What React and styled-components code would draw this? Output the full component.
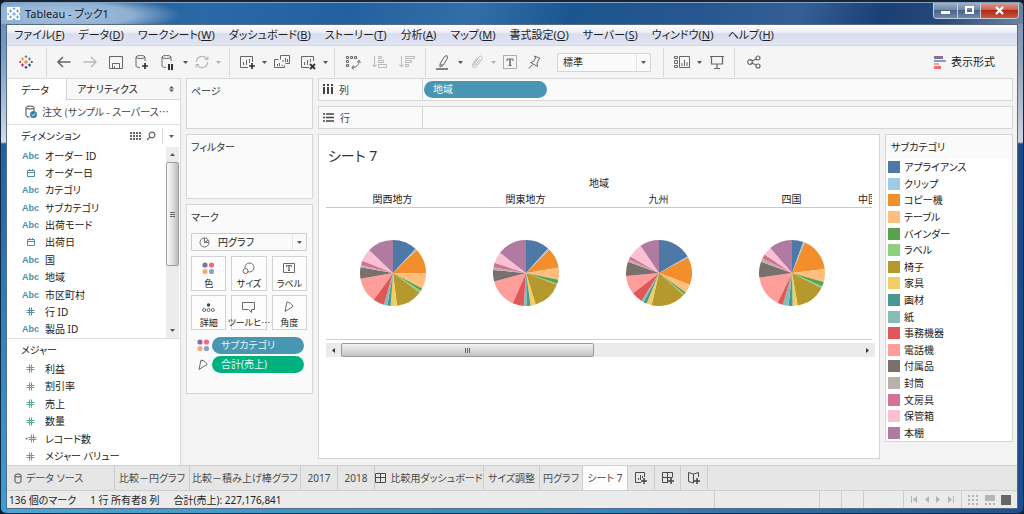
import React from "react";
import styled, { createGlobalStyle, css } from "styled-components";

const Global = createGlobalStyle`
  * { box-sizing: border-box; }
  body {
    margin: 0;
    background: #101c2c;
    font-family: "Noto Sans", "Noto Sans CJK JP", sans-serif;
    font-size: 10px;
    line-height: 16px;
    color: #222;
    font-feature-settings: "palt";
  }
  button, select {
    font: inherit;
    font-feature-settings: inherit;
    color: inherit;
    margin: 0;
    padding: 0;
    border: 0;
    background: none;
  }
  h1, h2, p, ul { margin: 0; padding: 0; font-size: inherit; font-weight: 400; list-style: none; }
  svg { display: block; flex: none; }
`;

/* ---------- window frame ---------- */

const Frame = styled.div`
  min-height: 100vh;
  display: flex;
  flex-direction: column;
  padding: 0 5px 4px;
  border: 1px solid #16263c;
  border-top: 2px solid #1b2430;
  border-radius: 6px;
  background:
    linear-gradient(180deg, #5d8dbd 0, #6f9ccb 50px, #d5dbe6 140px, #1d63a0 142px, #2b7fb8 300px, #35a3da 100%) left / 8px 100% no-repeat,
    linear-gradient(180deg, #7d90ad 0, #8a9cb6 50px, #ccd3e0 140px, #1b4a85 142px, #1f4f8f 100%) right / 8px 100% no-repeat,
    linear-gradient(90deg, #4aa6d6 0, #2f86c4 60%, #1c4f92 100%);
`;

const TitleBar = styled.header`
  display: flex;
  align-items: center;
  height: 22px;
  margin: 0 -5px;
  padding-left: 6px;
  border-radius: 5px 5px 0 0;
  border-top: 1px solid #7fa5cc;
  background:
    radial-gradient(ellipse 120px 20px at 60px 12px, #a9c1dc 0, #8fb0d2 60%, transparent 100%),
    linear-gradient(110deg, #4f83b8 0, #245f9e 12%, #2a69a6 20%, #23609e 34%, #326fa9 46%, #1b5590 56%, #27568f 68%, #345f96 78%, #1a3f74 86%, #27497a 92%, #71839f 100%);
`;

const AppTitle = styled.h1`
  flex: 1;
  margin-left: 5px;
  font-size: 11px;
  color: #10202f;
`;

const LogoTile = styled.span`
  width: 13px;
  height: 13px;
  display: grid;
  place-items: center;
  overflow: hidden;
  background: #fff;
`;

const WindowButtons = styled.div`
  display: flex;
  align-self: flex-start;
  height: 16px;
  margin-right: 4px;
  border: 1px solid #c0cddd;
  border-top: 0;
  border-radius: 0 0 4px 4px;
  overflow: hidden;
`;

const WindowButton = styled.button`
  width: ${(p) => (p.$close ? 38 : 23)}px;
  display: grid;
  place-items: center;
  border-left: ${(p) => (p.$first ? 0 : 1)}px solid #c0cddd;
  background: ${(p) =>
    p.$close
      ? "linear-gradient(#dc9c90 0, #c9604f 45%, #b02a1a 50%, #cf5436 100%)"
      : "linear-gradient(#9fb0c8 0, #7188a8 45%, #4a6388 50%, #6f89ab 100%)"};
`;

const Client = styled.div`
  flex: 1;
  display: flex;
  flex-direction: column;
  border: 1px solid #5a6b80;
  background: #f3f3f3;
`;

/* ---------- menu and toolbar ---------- */

const MenuBar = styled.nav`
  display: flex;
  gap: 14px;
  height: 20px;
  padding: 0 7px;
  background: linear-gradient(#fdfdfe 0, #eef0f8 35%, #d9deee 45%, #e1e5f3 100%);
`;

const MenuItem = styled.button`
  font-size: 11px;
  white-space: nowrap;
  color: #1d1d1d;
`;

const Toolbar = styled.div`
  display: flex;
  align-items: center;
  height: 33px;
  border-top: 1px solid #d8d8dc;
  background: #f5f5f5;
`;

const ToolButton = styled.button`
  width: ${(p) => p.$w || 26}px;
  height: 24px;
  display: grid;
  place-items: center;
  color: ${(p) => (p.$off ? "#b9b9b9" : "#666")};
`;

const ToolRule = styled.span`
  width: 1px;
  height: 29px;
  margin: 0 ${(p) => p.$after || 4}px 0 ${(p) => p.$before || 4}px;
  background: #d9d9d9;
`;

const SelectBox = styled.label`
  display: flex;
  align-items: center;
  height: ${(p) => p.$h || 18}px;
  width: ${(p) => p.$w || "auto"};
  margin: ${(p) => p.$top || 0}px 0 0 ${(p) => p.$left || 0}px;
  border: 1px solid ${(p) => p.$line || "#d4d4d4"};
  border-radius: 1px;
  background: #fafafa;
  select {
    appearance: none;
    flex: 1;
    min-width: 0;
    height: 100%;
    padding-left: 5px;
    outline: 0;
  }
`;

const SelectArrow = styled.span`
  width: 14px;
  height: 100%;
  display: grid;
  place-items: center;
  border-left: 1px solid #e6e6e6;
  pointer-events: none;
`;

const ShowMe = styled.button`
  display: flex;
  align-items: center;
  gap: 5px;
  margin-left: auto;
  margin-right: 22px;
  font-size: 11px;
`;

/* ---------- work area ---------- */

const Work = styled.main`
  flex: 1;
  display: flex;
  min-height: 0;
`;

const DataPane = styled.aside`
  width: 174px;
  flex: none;
  display: flex;
  flex-direction: column;
  border-right: 1px solid #d9d9d9;
  background: #fff;
`;

const PaneTabs = styled.div`
  display: flex;
  height: 22px;
`;

const PaneTab = styled.button`
  display: flex;
  align-items: center;
  justify-content: space-between;
  text-align: left;
  border-top: 1px solid #dcdcdc;
  ${(p) =>
    p.$active
      ? css`
          width: 59px;
          padding-left: 14px;
        `
      : css`
          flex: 1;
          padding: 0 6px 0 10px;
          border-left: 1px solid #d4d4d4;
          border-bottom: 1px solid #d4d4d4;
          background: #f7f7f7;
        `}
`;

const SourceRow = styled.div`
  display: flex;
  align-items: center;
  gap: 4px;
  height: 25px;
  padding-left: 18px;
  border-bottom: 1px solid #dedede;
  color: #444;
  white-space: nowrap;
`;

/* The Japanese face sets the ellipsis at mid height. */
const Clipped = styled.span`
  font-family: "Noto Sans CJK JP", sans-serif;
`;

const SectionHead = styled.div`
  display: flex;
  align-items: center;
  height: ${(p) => p.$h || 22}px;
  padding-left: 14px;
  h2 { flex: 1; }
`;

const HeadButton = styled.button`
  width: 16px;
  height: 16px;
  display: grid;
  place-items: center;
  color: #666;
`;

const HeadMenu = styled(HeadButton)`
  width: 18px;
  margin-left: 3px;
  border-left: 1px solid #d9d9d9;
`;

const FieldArea = styled.div`
  display: flex;
  height: 192px;
  border-bottom: 1px solid #dedede;
`;

const FieldList = styled.ul`
  flex: 1;
  display: grid;
  grid-auto-rows: 1fr;
  ${(p) => p.$measures && "flex: none; height: 105px;"}
`;

const Field = styled.li`
  display: flex;
  align-items: center;
  white-space: nowrap;
`;

const FieldIcon = styled.span`
  width: 38px;
  padding-left: 9px;
  display: flex;
  justify-content: center;
  font-family: "Liberation Sans", sans-serif;
  font-size: 9px;
  font-weight: 700;
  color: ${(p) => (p.$green ? "#4fae8b" : "#4f8fac")};
`;

const VScroll = styled.div`
  width: 13px;
  margin-right: 1px;
  display: flex;
  flex-direction: column;
  background: #ececec;
`;

const VArrow = styled.span`
  height: 15px;
  display: grid;
  place-items: center;
`;

const VThumb = styled.div`
  height: 104px;
  margin-bottom: auto;
  display: grid;
  place-items: center;
  border: 1px solid #9d9d9d;
  border-radius: 2px;
  background: linear-gradient(90deg, #fafafa, #e0e0e0 50%, #bdbdbd);
`;

/* ---------- cards ---------- */

const Cards = styled.div`
  width: 127px;
  flex: none;
  margin: 0 5px;
  display: flex;
  flex-direction: column;
  gap: 5px;
`;

const Card = styled.section`
  height: ${(p) => p.$h}px;
  padding: 4px 5px 0 4px;
  border: 1px solid #d6d6d6;
  background: #fafafa;
  h2 { color: #333; }
`;

const MarkGrid = styled.div`
  display: grid;
  grid-template-columns: repeat(3, minmax(0, 1fr));
  gap: 4px 5px;
  margin-top: 5px;
`;

const MarkButton = styled.button`
  height: 35px;
  display: flex;
  flex-direction: column;
  align-items: center;
  justify-content: space-between;
  padding-top: 5px;
  border: 1px solid #d2d2d2;
  background: #fdfdfd;
  font-size: 9px;
  line-height: 12px;
  white-space: nowrap;
  color: #222;
  svg { color: #6a6a6a; }
`;

const MarkRow = styled.div`
  display: flex;
  align-items: center;
  margin-top: ${(p) => p.$top}px;
  padding-right: 3px;
`;

const MarkRowIcon = styled.span`
  width: 21px;
  display: flex;
  justify-content: center;
  padding-left: 3px;
  color: #6a6a6a;
`;

const Pill = styled.button`
  ${(p) => (p.$w ? `width: ${p.$w}px;` : "flex: 1;")}
  height: 17px;
  padding-left: 9px;
  border-radius: 9px;
  text-align: left;
  line-height: 17px;
  color: #eaf6fa;
  background: ${(p) => (p.$green ? "#00b180" : "#4996b2")};
`;

/* ---------- shelves and view ---------- */

const Stage = styled.div`
  flex: 1;
  min-width: 0;
  display: flex;
  flex-direction: column;
  gap: 5px;
  padding-right: 4px;
`;

const Shelf = styled.div`
  display: flex;
  height: 23px;
  border: 1px solid #d6d6d6;
  background: #fafafa;
`;

const ShelfName = styled.div`
  width: 104px;
  display: flex;
  align-items: center;
  gap: 6px;
  padding-left: 4px;
  border-right: 1px solid #d6d6d6;
  color: #444;
`;

const ShelfBody = styled.div`
  padding: 2px 1px;
`;

const Lower = styled.div`
  display: flex;
  gap: 5px;
  align-items: flex-start;
  flex: 1;
`;

const View = styled.section`
  flex: 1;
  min-width: 0;
  align-self: stretch;
  margin-bottom: 6px;
  padding: 11px 4px 0 7px;
  border: 1px solid #d6d6d6;
  background: #fff;
`;

const SheetTitle = styled.h2`
  padding-left: 2px;
  font-size: 14px;
  line-height: 20px;
  color: #333;
`;

const ChartArea = styled.div`
  margin: 9px 3px 0 0;
  padding-bottom: 1px;
  border-bottom: 1px solid #cfcfcf;
  overflow: hidden;
`;

const ChartHead = styled.div`
  text-align: center;
`;

const PieColumns = styled.div`
  display: flex;
`;

const PieColumn = styled.div`
  width: 133px;
  flex: none;
  h2 {
    text-align: ${(p) => (p.$cut ? "left" : "center")};
    border-bottom: 1px solid #c8c8c8;
  }
`;

const PieCell = styled.div`
  height: 130px;
  display: grid;
  place-items: center;
`;

const HScroll = styled.div`
  display: flex;
  height: 14px;
  margin-top: 3px;
  background: #ebebeb;
`;

const HArrow = styled.span`
  width: 15px;
  display: grid;
  place-items: center;
`;

const HThumb = styled.div`
  width: 46%;
  margin-right: auto;
  display: grid;
  place-items: center;
  border: 1px solid #9a9a9a;
  border-radius: 2px;
  background: linear-gradient(#f2f2f2, #dcdcdc 50%, #c2c2c2);
`;

const Legend = styled.aside`
  width: 128px;
  border: 1px solid #d6d6d6;
  background: #fff;
  h2 {
    height: 24px;
    padding: 4px 5px 0;
    background: #fafafa;
  }
  ul {
    height: 282px;
    display: grid;
    grid-auto-rows: 1fr;
  }
`;

const LegendItem = styled.li`
  display: flex;
  align-items: center;
  gap: 4px;
  padding-left: 2px;
`;

const Swatch = styled.span`
  width: 12px;
  height: 12px;
  background: ${(p) => p.$color};
`;

/* ---------- sheet tabs and status ---------- */

const SheetTabs = styled.nav`
  display: flex;
  height: 26px;
  border-top: 1px solid #cfcfcf;
  border-bottom: 1px solid #cfcfcf;
  background: #e6e6e6;
`;

const SheetTab = styled.button`
  width: ${(p) => p.$w}px;
  display: flex;
  align-items: center;
  justify-content: ${(p) => (p.$start ? "flex-start" : "center")};
  gap: 4px;
  padding-left: ${(p) => (p.$start ? 7 : 0)}px;
  border-right: 1px solid #cbcbcb;
  background: ${(p) => (p.$active ? "#fdfdfd" : "transparent")};
  color: #4a4a4a;
  white-space: nowrap;
`;

const StatusBar = styled.footer`
  display: flex;
  align-items: center;
  height: 17px;
  padding-left: 2px;
  background: #ebebeb;
  white-space: nowrap;
`;

const StatusText = styled.span`
  margin-right: 14px;
`;

const StatusCell = styled.span`
  align-self: stretch;
  display: flex;
  align-items: center;
  justify-content: space-evenly;
  width: ${(p) => p.$w}px;
  margin-left: ${(p) => (p.$push ? "auto" : 0)};
  border-left: 1px solid #cdcdcd;
  color: #b5b5b5;
`;

const TinyButton = styled.button`
  display: grid;
  place-items: center;
  color: inherit;
`;

/* ---------- drawings ---------- */

const Svg = ({ w = 16, h = 16, children, ...rest }) => (
  <svg width={w} height={h} viewBox={`0 0 ${w} ${h}`} fill="none" stroke="currentColor" strokeWidth="1" aria-hidden="true" {...rest}>
    {children}
  </svg>
);

const Caret = ({ up, color = "#5a5a5a" }) => (
  <Svg w={7} h={5} stroke="none" fill={color}>
    <path d={up ? "M1 4h5L3.5 1z" : "M1 1h5L3.5 4z"} />
  </Svg>
);

const cross = (x, y, r) => `M${x - r} ${y}h${2 * r}M${x} ${y - r}v${2 * r}`;

const TableauMark = ({ blue }) => {
  const c = blue ? ["#4a93c4", "#4a93c4", "#4a93c4", "#4a93c4", "#4a93c4"] : ["#e8762c", "#c72037", "#5b879b", "#1f447e", "#eb9129"];
  return (
    <Svg w={14} h={14} strokeWidth={blue ? 0.8 : 1.1}>
      <path stroke={c[0]} d={cross(7, 7, 2)} />
      <path stroke={c[1]} d={cross(3.5, 10, 1.6)} />
      <path stroke={c[4]} d={cross(3.5, 4, 1.6)} />
      <path stroke={c[2]} d={cross(10.5, 4, 1.6)} />
      <path stroke={c[3]} d={cross(10.5, 10, 1.6)} />
      <path stroke={c[2]} d={cross(7, 1.6, 1.3)} />
      <path stroke={c[3]} d={cross(7, 12.4, 1.3)} />
      <path stroke={c[1]} d={cross(1.2, 7, 0.9)} />
      <path stroke={c[3]} d={cross(12.8, 7, 0.9)} />
    </Svg>
  );
};

const Plus = ({ x, y }) => <path d={`M${x - 3} ${y}h6M${x} ${y - 3}v6`} stroke="#333" strokeWidth="1.7" />;

const BackIcon = () => <Svg strokeWidth="1.6"><path d="M14.5 8H2M7 3L2 8l5 5" /></Svg>;
const ForwardIcon = () => <Svg strokeWidth="1.3"><path d="M1.5 8H14M9 3l5 5-5 5" /></Svg>;
const SaveIcon = () => <Svg><path d="M1.5 2.5h13v12h-13zM4.5 14v-4.5h7V14M6.5 12v2" /></Svg>;
const DatabaseShape = () => (
  <>
    <ellipse cx="6.5" cy="3" rx="4.5" ry="1.5" />
    <path d="M2 3v9c0 1 2 1.5 4 1.5M11 3v4" />
  </>
);
const AddDataIcon = () => <Svg><DatabaseShape /><Plus x={11} y={12} /></Svg>;
const PauseDataIcon = () => <Svg><DatabaseShape /><path d="M9 10v6M12 10v6" stroke="#333" strokeWidth="2" /></Svg>;
const RefreshIcon = () => <Svg strokeWidth="1.2"><path d="M2.5 8A5.5 5.5 0 0 1 12.8 5.200M13.5 8A5.500 5.500 0 0 1 3.200 10.800M13.8 2.500v3h-3M2.200 13.500v-3h3" /></Svg>;
const NewSheetIcon = () => <Svg><path d="M13.5 8V2.5h-12v11H9M4.5 11V8M7.5 11V6M10.5 9V5" /><Plus x={13} y={12} /></Svg>;
const DuplicateIcon = () => <Svg><path d="M6.5 5.500V1.500h9v8h-4M4.500 5.500h-4v8h10v-2M3.500 12v-2M5.500 12V9M8.500 12v-1M9 8V6M11.500 8V4M13.500 8V5" /></Svg>;
const ClearSheetIcon = () => <Svg><path d="M13.5 7V2.5h-12v11H9M4.5 11V8M7.5 11V6M10.5 8V5" /><path d="M10 10l5 5M15 10l-5 5" stroke="#333" strokeWidth="1.8" /></Svg>;
const SwapIcon = () => <Svg><path d="M1.5 2.5h2v2h-2zM5.500 2.5h2v2h-2zM9.500 2.5h2v2h-2zM1.5 6.500h2v2h-2zM1.5 10.500h2v2h-2zM14 6.500c.5 4-2.500 7-7 7M12 8.500l2-2.200 1.500 2.500M9 11.500l-2.300 2 2.300 2" /></Svg>;
const SortIcon = ({ desc }) => (
  <Svg>
    <path d="M2.5 2v11M.5 10.500l2 2.500 2-2.500" />
    <path d={desc ? "M6.5 2.500h9v2h-9zM6.5 6.500h6v2h-6zM6.5 10.500h3v2h-3z" : "M6.5 2.500h3v2h-3zM6.5 6.500h5v2h-5zM6.5 10.500h8v3h-8z"} />
  </Svg>
);
const PenIcon = () => <Svg><path d="M5 10L9.500 2.500 12 1.500l.5 2.500-4.500 7.500-3 1.500zM5 10l3 1.500" /><path d="M1 15h12" strokeWidth="1.6" /></Svg>;
const ClipIcon = () => <Svg><path d="M10.500 5.500L6.500 11c-1 1.300-2.500.3-1.600-1L10 3c1.500-2 4.500-.2 3 2L7.500 12.500c-2 2.500-5.500.5-3.800-2.300L8 4" /></Svg>;
const TextIcon = () => (
  <Svg>
    <rect x="1.5" y="1.5" width="13" height="13" strokeDasharray="1 1" />
    <path d="M5 7V5h6v2M6.500 11.500h3" />
    <path d="M8 5v6.500" strokeWidth="1.5" />
  </Svg>
);
const PinIcon = () => <Svg><path d="M8.500 2l5.500 2.500-1.500 1.500-1.500 3.500.5 3-7-4 3-1 2-3.500zM6.500 10.500L3 14.500" /></Svg>;
const CardsIcon = () => <Svg w={18}><path d="M1.5 2.5h3v2h-3zM1.5 6.5h3v3h-3zM1.5 11.5h3v2h-3zM6.5 2.5h10v11h-10zM9 12V9M11.5 12V6M14 12V8" /></Svg>;
const PresentIcon = () => <Svg><path d="M1 2.500h14M2.5 2.500v7.500h11V2.500M8 10v4M5 14.500h6" strokeWidth="1.2" /></Svg>;
const ShareIcon = () => <Svg strokeWidth="1.2"><circle cx="4" cy="8" r="2.300" /><circle cx="12" cy="4" r="2" /><circle cx="12" cy="12" r="2" /><path d="M6 7l4-2M6 9l4 2" /></Svg>;
const ShowMeIcon = () => (
  <Svg w={12} h={13} stroke="none">
    <path fill="#8a6c94" d="M0 0h9v3H0z" />
    <path fill="#7ba1cb" d="M0 4h12v2H0z" />
    <path fill="#f4a582" d="M0 7h5v2H0z" />
    <path fill="#f0697b" d="M0 10h7v3H0z" />
  </Svg>
);
const SourceIcon = () => (
  <Svg w={13} h={14}>
    <ellipse cx="5" cy="2.5" rx="4" ry="1.5" />
    <path d="M1 2.5v8c0 1 1.5 1.5 3.5 1.5M9 2.5V6" />
    <circle cx="8.5" cy="9.5" r="3.5" fill="#2f84a6" stroke="none" />
    <path d="M6.8 9.5l1.3 1.3 2.2-2.5" stroke="#fff" />
  </Svg>
);
const GridIcon = () => <Svg w={11} h={8} strokeWidth="2" strokeDasharray="2 1"><path d="M0 1h11M0 4h11M0 7h11" /></Svg>;
const SearchIcon = () => <Svg w={10} h={10} strokeWidth="1.2"><circle cx="6" cy="4" r="2.8" /><path d="M4 6L1 9" /></Svg>;
const CalendarIcon = () => <Svg w={10} h={10}><path d="M1.5 2.5h7v6h-7zM1.5 4.5h7M3.5 1v1M6.5 1v1" /></Svg>;
const HashIcon = ({ dot }) => (
  <Svg w={dot ? 12 : 9} h={9}>
    <g transform={dot ? "translate(3 0)" : undefined}><path d="M3.5 .5v8M5.5 .5v8M.5 3.500h8M.5 5.500h8" /></g>
    {dot && <path d="M.5 4.500h2" strokeWidth="2" />}
  </Svg>
);
const Grip = ({ vertical }) => <Svg w={7} h={7} stroke="#666">{vertical ? <path d="M1 1.5h5M1 3.5h5M1 5.5h5" /> : <path d="M1.5 1v5M3.5 1v5M5.5 1v5" />}</Svg>;
const DotsIcon = () => (
  <Svg w={13} h={13} stroke="none">
    <circle cx="3" cy="3" r="2.6" fill="#85709a" />
    <circle cx="9.5" cy="3" r="2.6" fill="#f8677c" />
    <circle cx="3" cy="9.5" r="2.6" fill="#f5a97c" />
    <circle cx="9.5" cy="9.5" r="2.6" fill="#7fa3cc" />
  </Svg>
);
const PieIcon = () => <Svg w={11} h={11}><circle cx="5.5" cy="5.5" r="4.5" /><path d="M5.5 1v4.5L9 3M5.5 5.5H9.5" /></Svg>;
const SizeIcon = () => <Svg w={13} h={13}><circle cx="7.500" cy="5.500" r="4.500" /><circle cx="3.500" cy="9" r="2.500" fill="#fdfdfd" /></Svg>;
const LabelIcon = () => <Svg w={12} h={12}><path d="M.5 1.5h11v9H.5zM3.5 5V3.500h5V5M5 8.500h2" /><path d="M6 3.500v5" strokeWidth="1.4" /></Svg>;
const DetailIcon = () => <Svg w={13} h={12}><circle cx="6.5" cy="4" r="1.7" fill="#444" stroke="none" /><circle cx="2.2" cy="9" r="1.500" /><circle cx="6.5" cy="9" r="1.500" /><circle cx="10.8" cy="9" r="1.500" /></Svg>;
const TipIcon = () => <Svg w={13} h={12}><path d="M.5 1.500h12v7H9.500v3l-3-3h-6z" /></Svg>;
const AngleIcon = () => <Svg w={12} h={12}><path d="M4 1L2 10.500 10 5.500C9 3 7 1.500 4 1z" /></Svg>;
const ColumnsIcon = () => <Svg w={10} h={11} strokeWidth="2"><path d="M1 0v2M5 0v2M9 0v2M1 3v7M5 3v7M9 3v7" /></Svg>;
const RowsIcon = () => <Svg w={11} h={9} strokeWidth="1.5"><path d="M0 1h2M0 4.5h2M0 8h2M3 1h8M3 4.5h8M3 8h8" /></Svg>;
const DbSmall = () => <Svg w={8} h={11}><ellipse cx="4" cy="2.5" rx="3" ry="1.5" /><path d="M1 2.500v6c0 2 6 2 6 0v-6" /></Svg>;
const DashIcon = () => <Svg w={11} h={11}><path d="M.5 .5h10v9H.5zM5.500 .5v9M.5 4.500h10" /></Svg>;
const NewTabIcon = ({ kind }) => (
  <Svg w={14} h={14}>
    {kind === "sheet" && <path d="M10.500 6V1.500h-9v10H7M4.500 9V7M6.500 9V4M8.500 7V5" />}
    {kind === "dash" && <path d="M11.500 6V1.500h-10v10H7M6.500 1.500v10M1.500 6.500h10" />}
    {kind === "story" && <path d="M11.500 6V1.500L6.500 3l-5-1.500v9l5 1.500M6.500 3v9" />}
    <path d="M7 10h6M10 7v6" stroke="#444" strokeWidth="1.5" />
  </Svg>
);

/* ---------- data ---------- */

const menus = [
  ["ファイル", "F"], ["データ", "D"], ["ワークシート", "W"], ["ダッシュボード", "B"], ["ストーリー", "T"], ["分析", "A"],
  ["マップ", "M"], ["書式設定", "O"], ["サーバー", "S"], ["ウィンドウ", "N"], ["ヘルプ", "H"],
];

const dimensions = [
  ["abc", "オーダー ID"], ["date", "オーダー日"], ["abc", "カテゴリ"], ["abc", "サブカテゴリ"], ["abc", "出荷モード"], ["date", "出荷日"],
  ["abc", "国"], ["abc", "地域"], ["abc", "市区町村"], ["num", "行 ID"], ["abc", "製品 ID"],
];

const measures = ["利益", "割引率", "売上", "数量", "レコード数", "メジャー バリュー"];

const categories = [
  ["アプライアンス", "#4e79a7"], ["クリップ", "#a0cbe8"], ["コピー機", "#f28e2b"], ["テーブル", "#ffbe7d"], ["バインダー", "#59a14f"],
  ["ラベル", "#8cd17d"], ["椅子", "#b6992d"], ["家具", "#f1ce63"], ["画材", "#499894"], ["紙", "#86bcb6"], ["事務機器", "#e15759"],
  ["電話機", "#ff9d9a"], ["付属品", "#79706e"], ["封筒", "#bab0ac"], ["文房具", "#d37295"], ["保管箱", "#fabfd2"], ["本棚", "#b07aa1"],
];

/* Each region lists the angle, in degrees clockwise from the top, where each slice ends. */
const regions = [
  { name: "関西地方", ends: [43, 46, 91, 118, 123, 126, 173, 184, 190, 196, 216, 260, 280, 284, 292, 314, 360] },
  { name: "関東地方", ends: [42, 45, 81, 102, 109, 111, 163, 172, 179, 184, 204, 255, 275, 280, 288, 308, 360] },
  { name: "九州", ends: [60, 62, 111, 126, 130, 132, 193, 202, 208, 212, 232, 265, 290, 294, 300, 326, 360] },
  { name: "四国", ends: [20, 23, 83, 106, 114, 117, 170, 179, 186, 196, 206, 262, 290, 296, 304, 319, 360] },
  { name: "中国地方", ends: null },
];

const point = (deg, r) => {
  const a = (deg * Math.PI) / 180;
  return `${(r + r * Math.sin(a)).toFixed(2)} ${(r - r * Math.cos(a)).toFixed(2)}`;
};

const Pie = ({ ends }) => {
  const r = 33;
  return (
    <svg width={66} height={66} viewBox="0 0 66 66" role="img" aria-label="円グラフ">
      {ends.map((end, i) => {
        const start = i ? ends[i - 1] : 0;
        return <path key={end} fill={categories[i][1]} d={`M${r} ${r}L${point(start, r)}A${r} ${r} 0 0 1 ${point(end, r)}z`} />;
      })}
    </svg>
  );
};

const FieldRow = ({ kind, children, green }) => (
  <Field>
    <FieldIcon $green={green}>
      {kind === "abc" && "Abc"}
      {kind === "date" && <CalendarIcon />}
      {kind === "num" && <HashIcon />}
      {kind === "count" && <HashIcon dot />}
    </FieldIcon>
    {children}
  </Field>
);

const CaretButton = ({ off }) => (
  <ToolButton $w={9} aria-label="その他"><Caret color={off ? "#b0b0b0" : "#555"} /></ToolButton>
);

const sheetTabs = [
  { text: "データ ソース", w: 108, icon: <DbSmall />, start: true },
  { text: "比較－円グラフ", w: 75 },
  { text: "比較－積み上げ棒グラフ", w: 111 },
  { text: "2017", w: 37 },
  { text: "2018", w: 37 },
  { text: "比較用ダッシュボード", w: 109, icon: <DashIcon /> },
  { text: "サイズ調整", w: 56 },
  { text: "円グラフ", w: 43 },
  { text: "シート 7", w: 45, active: true },
];

const marks = [
  ["色", <DotsIcon />], ["サイズ", <SizeIcon />], ["ラベル", <LabelIcon />],
  ["詳細", <DetailIcon />], ["ツールヒ…", <TipIcon />], ["角度", <AngleIcon />],
];

export default function App() {
  return (
    <>
      <Global />
      <Frame>
        <TitleBar>
          <LogoTile><TableauMark blue /></LogoTile>
          <AppTitle>Tableau - ブック1</AppTitle>
          <WindowButtons>
            <WindowButton $first aria-label="最小化"><Svg w={9} h={9} stroke="none"><path fill="#fff" d="M0 5h9v3H0z" /></Svg></WindowButton>
            <WindowButton aria-label="最大化"><Svg w={9} h={9} stroke="#fff" strokeWidth="2"><path d="M1 1h7v6H1z" /></Svg></WindowButton>
            <WindowButton $close aria-label="閉じる"><Svg w={9} h={9} stroke="#fff" strokeWidth="2.4"><path d="M1 1l7 7M8 1L1 8" /></Svg></WindowButton>
          </WindowButtons>
        </TitleBar>
        <Client>
          <MenuBar>
            {menus.map(([name, key]) => (
              <MenuItem key={key}>{name}(<u>{key}</u>)</MenuItem>
            ))}
          </MenuBar>

          <Toolbar>
            <ToolButton $w={38} aria-label="Tableau"><TableauMark /></ToolButton>
            <ToolRule $before={1} />
            <ToolButton aria-label="元に戻す"><BackIcon /></ToolButton>
            <ToolButton $off aria-label="やり直す"><ForwardIcon /></ToolButton>
            <ToolButton aria-label="保存"><SaveIcon /></ToolButton>
            <ToolButton aria-label="データ ソースの追加"><AddDataIcon /></ToolButton>
            <ToolButton aria-label="自動更新の一時停止"><PauseDataIcon /></ToolButton>
            <CaretButton />
            <ToolButton $w={24} $off aria-label="更新"><RefreshIcon /></ToolButton>
            <CaretButton off />
            <ToolRule $before={6} />
            <ToolButton aria-label="新しいワークシート"><NewSheetIcon /></ToolButton>
            <CaretButton />
            <ToolButton aria-label="複製"><DuplicateIcon /></ToolButton>
            <ToolButton aria-label="クリア"><ClearSheetIcon /></ToolButton>
            <CaretButton />
            <ToolRule />
            <ToolButton $w={27} aria-label="行と列の交換"><SwapIcon /></ToolButton>
            <ToolButton $w={27} $off aria-label="昇順"><SortIcon /></ToolButton>
            <ToolButton $w={27} $off aria-label="降順"><SortIcon desc /></ToolButton>
            <ToolRule $before={5} />
            <ToolButton aria-label="ハイライト"><PenIcon /></ToolButton>
            <CaretButton />
            <ToolButton $w={24} $off aria-label="グループ"><ClipIcon /></ToolButton>
            <CaretButton off />
            <ToolButton $w={24} aria-label="マーク ラベル"><TextIcon /></ToolButton>
            <ToolButton $w={24} aria-label="軸の固定"><PinIcon /></ToolButton>
            <SelectBox $w="94px" $h={19} $left={11}>
              <select defaultValue="標準" aria-label="表示サイズ"><option>標準</option><option>幅を合わせる</option></select>
              <SelectArrow><Caret /></SelectArrow>
            </SelectBox>
            <ToolRule $before={12} $after={5} />
            <ToolButton aria-label="カードの表示"><CardsIcon /></ToolButton>
            <CaretButton />
            <ToolButton aria-label="プレゼンテーション モード"><PresentIcon /></ToolButton>
            <ToolRule />
            <ToolButton $w={30} aria-label="共有"><ShareIcon /></ToolButton>
            <ShowMe><ShowMeIcon />表示形式</ShowMe>
          </Toolbar>

          <Work>
            <DataPane>
              <PaneTabs>
                <PaneTab $active>データ</PaneTab>
                <PaneTab>アナリティクス<Svg w={5} h={8} stroke="none" fill="#555"><path d="M0 3.5h5L2.5 1zM0 4.5h5L2.5 7z" /></Svg></PaneTab>
              </PaneTabs>
              <SourceRow><SourceIcon /><Clipped>注文 (サンプル - スーパース…</Clipped></SourceRow>
              <SectionHead>
                <h2>ディメンション</h2>
                <HeadButton aria-label="表示"><GridIcon /></HeadButton>
                <HeadButton aria-label="検索"><SearchIcon /></HeadButton>
                <HeadMenu aria-label="メニュー"><Caret /></HeadMenu>
              </SectionHead>
              <FieldArea>
                <FieldList>
                  {dimensions.map(([kind, name]) => <FieldRow key={name} kind={kind}>{name}</FieldRow>)}
                </FieldList>
                <VScroll>
                  <VArrow><Caret up /></VArrow>
                  <VThumb><Grip vertical /></VThumb>
                  <VArrow><Caret /></VArrow>
                </VScroll>
              </FieldArea>
              <SectionHead $h={21}><h2>メジャー</h2></SectionHead>
              <FieldList $measures>
                {measures.map((name) => <FieldRow key={name} green kind={name === "レコード数" ? "count" : "num"}>{name}</FieldRow>)}
              </FieldList>
            </DataPane>

            <Cards>
              <Card $h={51}><h2>ページ</h2></Card>
              <Card $h={65}><h2>フィルター</h2></Card>
              <Card $h={190}>
                <h2>マーク</h2>
                <SelectBox $w="100%" $top={8} $line="#cbcbcb">
                  <MarkRowIcon><PieIcon /></MarkRowIcon>
                  <select defaultValue="円グラフ" aria-label="マークの種類"><option>円グラフ</option><option>自動</option></select>
                  <SelectArrow><Caret /></SelectArrow>
                </SelectBox>
                <MarkGrid>
                  {marks.map(([name, icon]) => <MarkButton key={name}>{icon}<Clipped>{name}</Clipped></MarkButton>)}
                </MarkGrid>
                <MarkRow $top={7}><MarkRowIcon><DotsIcon /></MarkRowIcon><Pill>サブカテゴリ</Pill></MarkRow>
                <MarkRow $top={2}><MarkRowIcon><AngleIcon /></MarkRowIcon><Pill $green>合計(売上)</Pill></MarkRow>
              </Card>
            </Cards>

            <Stage>
              <Shelf>
                <ShelfName><ColumnsIcon />列</ShelfName>
                <ShelfBody><Pill $w={123}>地域</Pill></ShelfBody>
              </Shelf>
              <Shelf>
                <ShelfName><RowsIcon />行</ShelfName>
              </Shelf>
              <Lower>
                <View>
                  <SheetTitle>シート 7</SheetTitle>
                  <ChartArea>
                    <ChartHead>地域</ChartHead>
                    <PieColumns>
                      {regions.map((region) => (
                        <PieColumn key={region.name} $cut={!region.ends}>
                          <h2>{region.name}</h2>
                          <PieCell>{region.ends && <Pie ends={region.ends} />}</PieCell>
                        </PieColumn>
                      ))}
                    </PieColumns>
                  </ChartArea>
                  <HScroll>
                    <HArrow><Svg w={5} h={7} stroke="none" fill="#333"><path d="M4 1v5L1 3.5z" /></Svg></HArrow>
                    <HThumb><Grip /></HThumb>
                    <HArrow><Svg w={5} h={7} stroke="none" fill="#333"><path d="M1 1v5l3-2.5z" /></Svg></HArrow>
                  </HScroll>
                </View>
                <Legend>
                  <h2>サブカテゴリ</h2>
                  <ul>
                    {categories.map(([name, color]) => <LegendItem key={name}><Swatch $color={color} />{name}</LegendItem>)}
                  </ul>
                </Legend>
              </Lower>
            </Stage>
          </Work>

          <SheetTabs>
            {sheetTabs.map((t) => (
              <SheetTab key={t.text} $w={t.w} $active={t.active} $start={t.start}>{t.icon}{t.text}</SheetTab>
            ))}
            <SheetTab $w={27} aria-label="新しいワークシート"><NewTabIcon kind="sheet" /></SheetTab>
            <SheetTab $w={26} aria-label="新しいダッシュボード"><NewTabIcon kind="dash" /></SheetTab>
            <SheetTab $w={27} aria-label="新しいストーリー"><NewTabIcon kind="story" /></SheetTab>
          </SheetTabs>

          <StatusBar>
            <StatusText>136 個のマーク</StatusText>
            <StatusText>1 行 所有者8 列</StatusText>
            <StatusText>合計(売上): 227,176,841</StatusText>
            <StatusCell $w={105} $push />
            <StatusCell $w={22} />
            <StatusCell $w={22} />
            <StatusCell $w={40} />
            <StatusCell $w={58}>
              <TinyButton aria-label="最初"><Svg w={7} h={7} stroke="none" fill="currentColor"><path d="M0 0h1v7H0zM6 0v7L2 3.5z" /></Svg></TinyButton>
              <TinyButton aria-label="前"><Svg w={4} h={7} stroke="none" fill="currentColor"><path d="M4 0v7L0 3.5z" /></Svg></TinyButton>
              <TinyButton aria-label="次"><Svg w={4} h={7} stroke="none" fill="currentColor"><path d="M0 0v7l4-3.5z" /></Svg></TinyButton>
              <TinyButton aria-label="最後"><Svg w={7} h={7} stroke="none" fill="currentColor"><path d="M6 0h1v7H6zM1 0v7l4-3.5z" /></Svg></TinyButton>
            </StatusCell>
            <StatusCell $w={56}>
              <TinyButton aria-label="タブ"><Svg w={10} h={10} stroke="none" fill="currentColor"><path d="M0 0h2v2H0zM4 0h2v2H4zM8 0h2v2H8zM0 4h2v2H0zM4 4h2v2H4zM8 4h2v2H8zM0 8h2v2H0zM4 8h2v2H4zM8 8h2v2H8z" /></Svg></TinyButton>
              <TinyButton aria-label="フィルムストリップ"><Svg w={10} h={10} stroke="none" fill="currentColor"><path d="M0 0h10v6H0zM0 8h2v2H0zM4 8h2v2H4zM8 8h2v2H8z" /></Svg></TinyButton>
              <TinyButton aria-label="シート"><Svg w={10} h={10} stroke="none" fill="#666"><path d="M0 0h10v10H0z" /></Svg></TinyButton>
            </StatusCell>
          </StatusBar>
        </Client>
      </Frame>
    </>
  );
}
